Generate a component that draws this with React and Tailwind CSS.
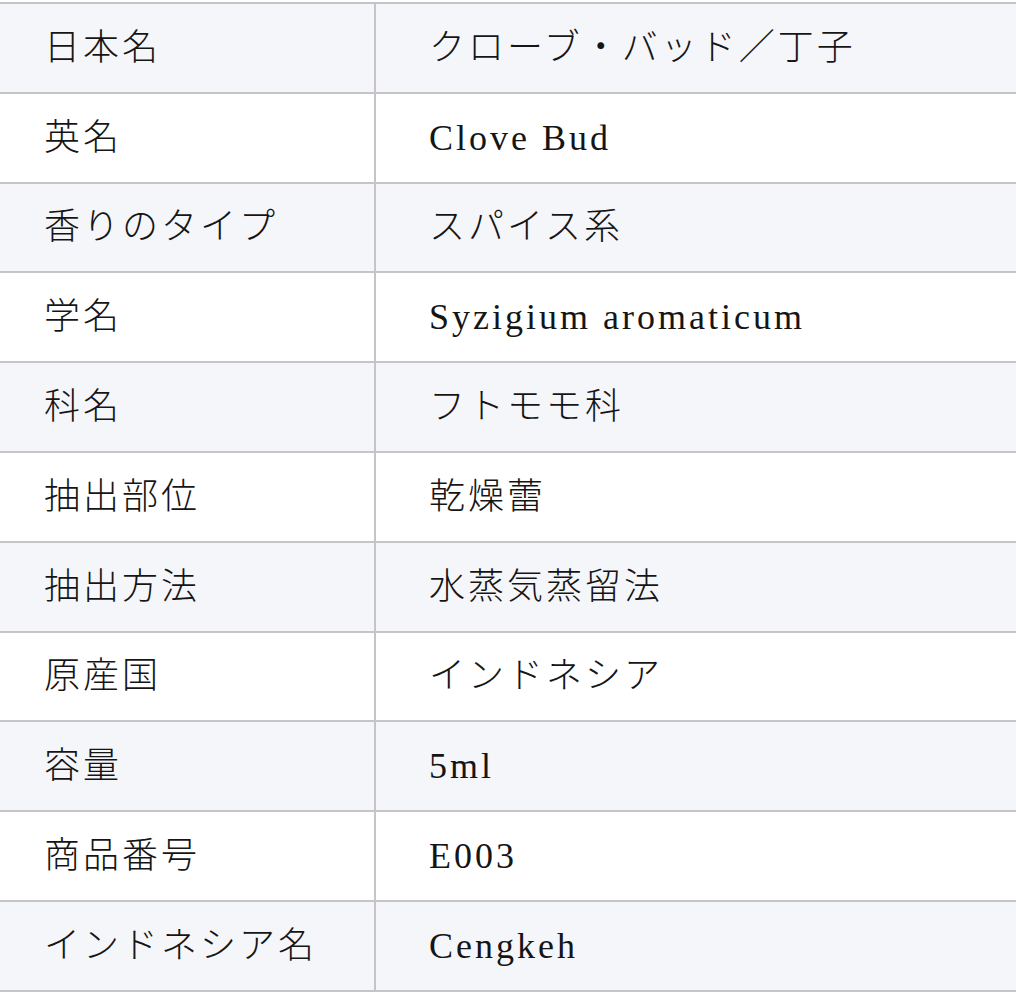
import React from "react";

const rows = [
  ["日本名", "クローブ・バッド／丁子"],
  ["英名", "Clove Bud"],
  ["香りのタイプ", "スパイス系"],
  ["学名", "Syzigium aromaticum"],
  ["科名", "フトモモ科"],
  ["抽出部位", "乾燥蕾"],
  ["抽出方法", "水蒸気蒸留法"],
  ["原産国", "インドネシア"],
  ["容量", "5ml"],
  ["商品番号", "E003"],
  ["インドネシア名", "Cengkeh"],
];

const App = () => {
  return (
    <div className="w-[1016px] h-[992px] bg-white pt-[2px] overflow-hidden">
      <div
        className="border-b-2 border-[#c6c4c7] text-[36px] tracking-[3px] text-[#151515] font-light"
        style={{ fontFamily: '"Liberation Serif", "Noto Sans CJK JP", serif' }}
      >
        {rows.map(([label, value], i) => (
          <div
            key={label}
            className={
              "flex h-[89.8px] border-t-2 border-[#c6c4c7] " +
              (i % 2 === 0 ? "bg-[#f5f6fa]" : "bg-white")
            }
          >
            <div className="w-[376px] shrink-0 flex items-center pl-[44px] border-r-2 border-[#c6c4c7]">
              {label}
            </div>
            <div className="flex-1 flex items-center pl-[53px]">{value}</div>
          </div>
        ))}
      </div>
    </div>
  );
};

export default App;
